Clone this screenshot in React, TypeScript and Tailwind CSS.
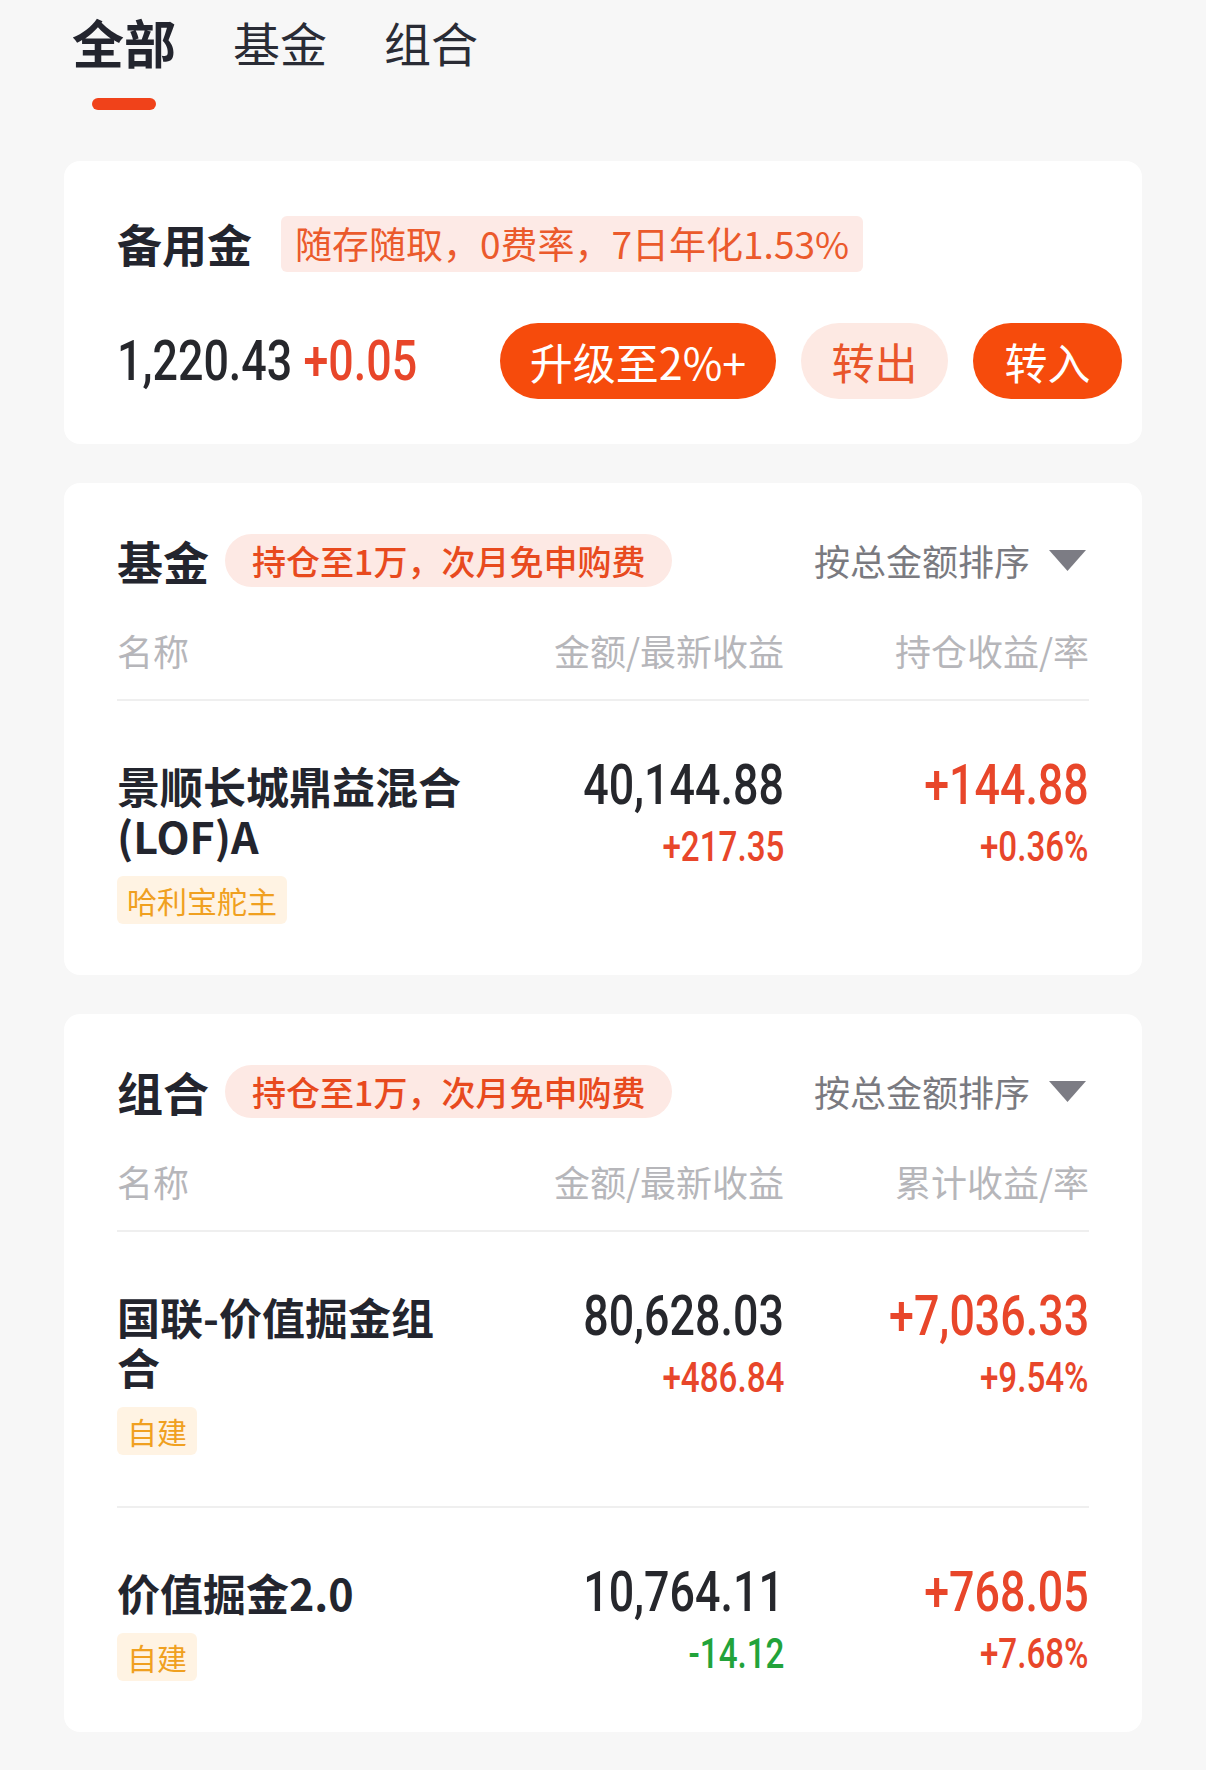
import React from "react";

type Holding = {
  name: string;
  tag: string;
  amount: string;
  daily: string;
  dailyUp: boolean;
  total: string;
  rate: string;
};

const funds: Holding[] = [
  {
    name: "景顺长城鼎益混合(LOF)A",
    tag: "哈利宝舵主",
    amount: "40,144.88",
    daily: "+217.35",
    dailyUp: true,
    total: "+144.88",
    rate: "+0.36%",
  },
];

const combos: Holding[] = [
  {
    name: "国联-价值掘金组合",
    tag: "自建",
    amount: "80,628.03",
    daily: "+486.84",
    dailyUp: true,
    total: "+7,036.33",
    rate: "+9.54%",
  },
  {
    name: "价值掘金2.0",
    tag: "自建",
    amount: "10,764.11",
    daily: "-14.12",
    dailyUp: false,
    total: "+768.05",
    rate: "+7.68%",
  },
];

// app number font is a condensed DIN-ish face; squeeze Roboto to match
const num = "font-[family-name:'Roboto',sans-serif] font-medium";

function Tabs() {
  return (
    <div className="flex items-start gap-[57px] pl-[72px] pt-[16px]">
      <div className="flex flex-col items-center">
        <span className="text-[52px] font-bold leading-[52px] text-[#23252e]">全部</span>
        <span className="mt-[30px] h-[12px] w-[64px] rounded-full bg-[#f0421a]" />
      </div>
      <span className="text-[47px] leading-[52px] text-[#2a2c35]">基金</span>
      <span className="text-[47px] leading-[52px] text-[#2a2c35]">组合</span>
    </div>
  );
}

function Reserve() {
  return (
    <div className="mx-[64px] mt-[51px] rounded-[16px] bg-white pb-[45px] pl-[53px] pr-[20px] pt-[55px]">
      <div className="flex items-center">
        <span className="text-[45px] font-bold leading-[56px] text-[#23252e]">备用金</span>
        <span className="ml-[29px] flex h-[56px] items-center rounded-[6px] bg-[#fdeae6] px-[14px] text-[37px] text-[#eb5a2c]">
          随存随取，0费率，7日年化1.53%
        </span>
      </div>
      <div className="mt-[51px] flex items-center">
        <div className={`${num} inline-block origin-left scale-x-[0.8] whitespace-nowrap text-[56px] leading-[76px]`}>
          <span className="text-[#26272c]">1,220.43</span>{" "}
          <span className="text-[#e8462a]">+0.05</span>
        </div>
        <div className="ml-auto flex items-center gap-[25px]">
          <button className="flex h-[76px] w-[276px] items-center justify-center rounded-full bg-[#f64b0c] text-[43px] text-white">
            升级至2%+
          </button>
          <button className="flex h-[76px] w-[147px] items-center justify-center rounded-full bg-[#fde9e3] text-[43px] text-[#e9552a]">
            转出
          </button>
          <button className="flex h-[76px] w-[149px] items-center justify-center rounded-full bg-[#f64b0c] text-[43px] text-white">
            转入
          </button>
        </div>
      </div>
    </div>
  );
}

function HoldingRow({ item }: { item: Holding }) {
  return (
    <div className="flex items-start pb-[51px] pt-[59px]">
      <div className="flex-1">
        <div className="w-[350px] text-[43px] font-bold leading-[50px] text-[#23252e]">{item.name}</div>
        <span className="mt-[16px] inline-flex h-[48px] items-center rounded-[6px] bg-[#fff3e3] px-[10px] text-[30px] text-[#f0a020]">
          {item.tag}
        </span>
      </div>
      <div className={`${num} w-[300px] text-right`}>
        <div className="text-[56px] leading-[50px] text-[#26272c]">
          <span className="inline-block origin-right scale-x-[0.8]">{item.amount}</span>
        </div>
        <div className={`mt-[12px] text-[42px] leading-[50px] ${item.dailyUp ? "text-[#e8462a]" : "text-[#22a33a]"}`}>
          <span className="inline-block origin-right scale-x-[0.79]">{item.daily}</span>
        </div>
      </div>
      <div className={`${num} w-[305px] text-right text-[#e8462a]`}>
        <div className="text-[56px] leading-[50px]">
          <span className="inline-block origin-right scale-x-[0.8]">{item.total}</span>
        </div>
        <div className="mt-[12px] text-[42px] leading-[50px]">
          <span className="inline-block origin-right scale-x-[0.79]">{item.rate}</span>
        </div>
      </div>
    </div>
  );
}

function Section({ title, lastLabel, rows }: { title: string; lastLabel: string; rows: Holding[] }) {
  return (
    <div className="mx-[64px] mt-[39px] rounded-[16px] bg-white px-[53px] pt-[51px]">
      <div className="flex items-center">
        <span className="text-[46px] font-bold leading-[53px] text-[#23252e]">{title}</span>
        <span className="ml-[16px] flex h-[53px] items-center rounded-full bg-[#fde9e4] px-[27px] text-[34px] font-medium text-[#e84a1e]">
          持仓至1万，次月免申购费
        </span>
        <span className="ml-auto text-[36px] leading-[53px] text-[#7a7a80]">按总金额排序</span>
        <svg className="ml-[19px] mr-[3px]" width="37" height="21" viewBox="0 0 37 21">
          <path d="M0 0h37L18.5 21z" fill="#7c7c84" />
        </svg>
      </div>
      <div className="mt-[43px] flex text-[36px] leading-[40px] text-[#b6b6ba]">
        <div className="flex-1">名称</div>
        <div className="w-[300px] text-right">金额/最新收益</div>
        <div className="w-[305px] text-right">{lastLabel}</div>
      </div>
      <div className="mt-[29px] h-[2px] bg-[#efefef]" />
      {rows.map((r, i) => (
        <div key={r.name}>
          {i > 0 && <div className="h-[2px] bg-[#efefef]" />}
          <HoldingRow item={r} />
        </div>
      ))}
    </div>
  );
}

export default function App() {
  return (
    <div className="min-h-[1770px] w-full bg-[#f7f7f7] font-[family-name:'Noto_Sans_CJK_SC','Noto_Sans',sans-serif]">
      <Tabs />
      <Reserve />
      <Section title="基金" lastLabel="持仓收益/率" rows={funds} />
      <Section title="组合" lastLabel="累计收益/率" rows={combos} />
    </div>
  );
}
